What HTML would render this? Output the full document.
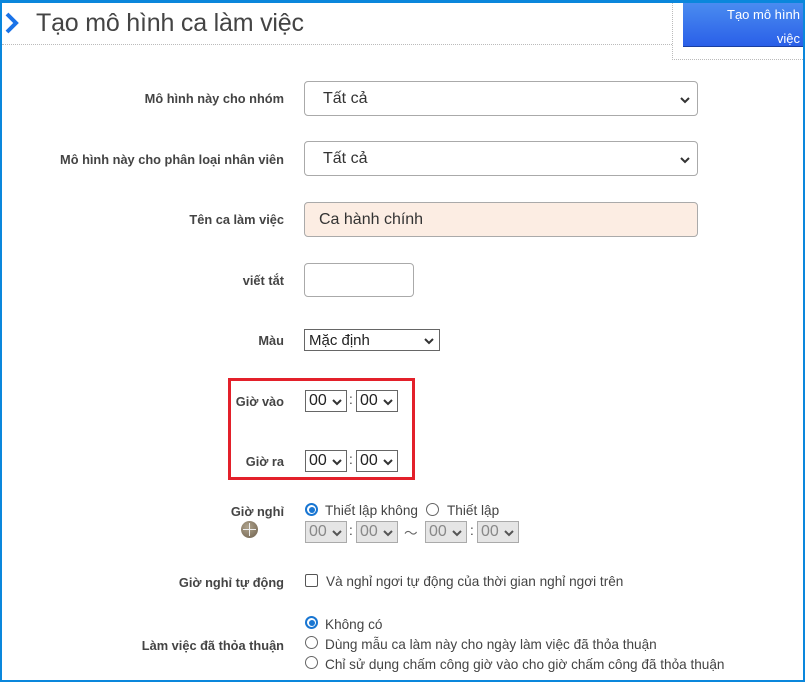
<!DOCTYPE html>
<html><head><meta charset="utf-8"><style>
*{box-sizing:border-box;margin:0;padding:0}
body{width:805px;height:682px;position:relative;overflow:hidden;background:#fff;font-family:"Liberation Sans",Arial,sans-serif;color:#333}
.a{position:absolute}
.frame{left:0;top:0;width:805px;height:682px;border:2px solid #0a87dc;border-top-width:3px}
.lbl{position:absolute;right:521px;font-size:12.8px;font-weight:bold;color:#444;white-space:nowrap;text-align:right}
.sel{position:absolute;border:1px solid #aaa;border-radius:4px;background:#fff;font-size:16px;color:#333}
.sel .t{position:absolute;left:18px;top:8px}
.chev{position:absolute;width:12px;height:8px}
.ss{position:absolute;width:42px;height:22px;border:1px solid #666;background:#fff;font-size:16px;color:#222}
.ss span{position:absolute;left:3px;top:1px}
.ss svg{position:absolute;right:4px;top:8px}
.ss.g{background:#e5e5e5;border-color:#aaa;color:#888}
.txt{position:absolute;font-size:13.6px;color:#444;white-space:nowrap}
.rad{position:absolute;width:13px;height:13px;border:1px solid #666;border-radius:50%;background:#fff}
.rad.on{border:2px solid #1976d2}
.rad.on::after{content:"";position:absolute;left:1.5px;top:1.5px;width:6px;height:6px;border-radius:50%;background:#1976d2}
</style></head><body>
<div class="a frame"></div>
<svg class="a" style="left:5px;top:12px" width="14" height="22" viewBox="0 0 14 22"><path d="M2 2 L11 11 L2 20" fill="none" stroke="#1a73e8" stroke-width="4"/></svg>
<div class="a" style="left:36px;top:9px;font-size:25px;color:#444;letter-spacing:-0.2px">Tạo mô hình ca làm việc</div>
<div class="a" style="left:2px;top:44px;width:670px;border-top:1px dotted #bbb"></div>
<div class="a" style="left:672px;top:3px;height:57px;border-left:1px dotted #bbb"></div>
<div class="a" style="left:672px;top:59px;width:131px;border-top:1px dotted #bbb"></div>
<div class="a" style="left:683px;top:3px;width:120px;height:44px;background:linear-gradient(#4a8cf0,#2a5fe8);border-bottom:1px solid #1a3fa0;color:#fff;font-size:13px;text-align:right;padding-right:3px;line-height:24px">Tạo mô hình<br>việc</div>

<div class="lbl" style="top:91px">Mô hình này cho nhóm</div>
<div class="sel" style="left:304px;top:81px;width:394px;height:35px"><span class="t">Tất cả</span><svg class="chev" style="right:6px;top:14px" viewBox="0 0 12 8"><path d="M2 2l4 4 4-4" fill="none" stroke="#333" stroke-width="2"/></svg></div>
<div class="lbl" style="top:152px">Mô hình này cho phân loại nhân viên</div>
<div class="sel" style="left:304px;top:141px;width:394px;height:35px"><span class="t">Tất cả</span><svg class="chev" style="right:6px;top:14px" viewBox="0 0 12 8"><path d="M2 2l4 4 4-4" fill="none" stroke="#333" stroke-width="2"/></svg></div>
<div class="lbl" style="top:212px">Tên ca làm việc</div>
<div class="sel" style="left:304px;top:202px;width:394px;height:35px;background:#fcede3"><span class="t" style="left:14px">Ca hành chính</span></div>
<div class="lbl" style="top:273px">viết tắt</div>
<div class="sel" style="left:304px;top:263px;width:110px;height:34px"></div>
<div class="lbl" style="top:333px">Màu</div>
<div class="a" style="left:304px;top:329px;width:136px;height:22px;border:1px solid #666;font-size:15px;color:#222"><span style="position:absolute;left:4px;top:2px">Mặc định</span><svg class="chev" style="right:4px;top:7px" viewBox="0 0 12 8"><path d="M2 2l4 4 4-4" fill="none" stroke="#333" stroke-width="2"/></svg></div>

<div class="a" style="left:228px;top:378px;width:187px;height:102px;border:3px solid #e3202a"></div>
<div class="lbl" style="top:394px">Giờ vào</div>
<div class="lbl" style="top:454px">Giờ ra</div>

<div class="ss" style="left:305px;top:390px"><span>00</span><svg width="10" height="7" viewBox="0 0 10 7"><path d="M1 1l4 4 4-4" fill="none" stroke="#333" stroke-width="2"/></svg></div>
<div class="txt" style="left:349px;top:392px">:</div>
<div class="ss" style="left:356px;top:390px"><span>00</span><svg width="10" height="7" viewBox="0 0 10 7"><path d="M1 1l4 4 4-4" fill="none" stroke="#333" stroke-width="2"/></svg></div>
<div class="ss" style="left:305px;top:450px"><span>00</span><svg width="10" height="7" viewBox="0 0 10 7"><path d="M1 1l4 4 4-4" fill="none" stroke="#333" stroke-width="2"/></svg></div>
<div class="txt" style="left:349px;top:452px">:</div>
<div class="ss" style="left:356px;top:450px"><span>00</span><svg width="10" height="7" viewBox="0 0 10 7"><path d="M1 1l4 4 4-4" fill="none" stroke="#333" stroke-width="2"/></svg></div>

<div class="lbl" style="top:504px">Giờ nghỉ</div>
<div class="a" style="left:241px;top:521px;width:17px;height:17px;border-radius:50%;background:radial-gradient(circle at 40% 35%,#b0a48e,#6e604c)"></div>
<div class="a" style="left:249px;top:523px;width:1px;height:13px;background:#eee"></div>
<div class="a" style="left:243px;top:529px;width:13px;height:1px;background:#eee"></div>
<div class="rad on" style="left:305px;top:503px"></div>
<div class="txt" style="left:325px;top:503px">Thiết lập không</div>
<div class="rad" style="left:426px;top:503px"></div>
<div class="txt" style="left:447px;top:503px">Thiết lập</div>
<div class="ss g" style="left:305px;top:521px"><span>00</span><svg width="10" height="7" viewBox="0 0 10 7"><path d="M1 1l4 4 4-4" fill="none" stroke="#555" stroke-width="2"/></svg></div>
<div class="txt" style="left:349px;top:523px">:</div>
<div class="ss g" style="left:356px;top:521px"><span>00</span><svg width="10" height="7" viewBox="0 0 10 7"><path d="M1 1l4 4 4-4" fill="none" stroke="#555" stroke-width="2"/></svg></div>
<div class="txt" style="left:404px;top:522px;color:#666">～</div>
<div class="ss g" style="left:425px;top:521px"><span>00</span><svg width="10" height="7" viewBox="0 0 10 7"><path d="M1 1l4 4 4-4" fill="none" stroke="#555" stroke-width="2"/></svg></div>
<div class="txt" style="left:470px;top:523px">:</div>
<div class="ss g" style="left:477px;top:521px"><span>00</span><svg width="10" height="7" viewBox="0 0 10 7"><path d="M1 1l4 4 4-4" fill="none" stroke="#555" stroke-width="2"/></svg></div>

<div class="lbl" style="top:575px">Giờ nghỉ tự động</div>
<div class="a" style="left:305px;top:574px;width:13px;height:13px;border:1px solid #555;border-radius:2px"></div>
<div class="txt" style="left:326px;top:574px">Và nghỉ ngơi tự động của thời gian nghỉ ngơi trên</div>

<div class="lbl" style="top:638px">Làm việc đã thỏa thuận</div>
<div class="rad on" style="left:305px;top:616px"></div>
<div class="txt" style="left:325px;top:617px">Không có</div>
<div class="rad" style="left:305px;top:636px"></div>
<div class="txt" style="left:325px;top:637px">Dùng mẫu ca làm này cho ngày làm việc đã thỏa thuận</div>
<div class="rad" style="left:305px;top:656px"></div>
<div class="txt" style="left:325px;top:657px">Chỉ sử dụng chấm công giờ vào cho giờ chấm công đã thỏa thuận</div>
</body></html>
